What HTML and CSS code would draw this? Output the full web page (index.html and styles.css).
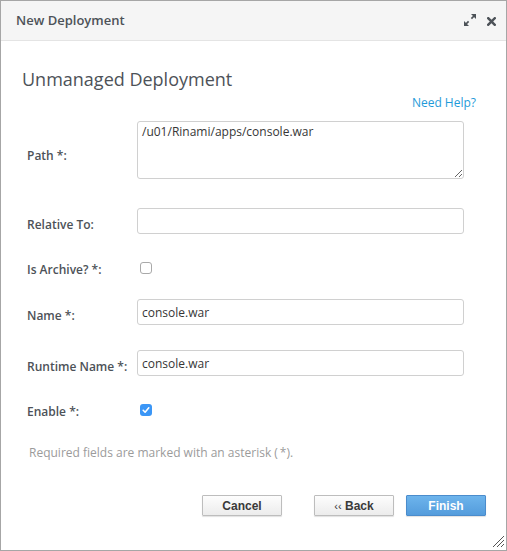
FILE: index.html
```html
<!DOCTYPE html>
<html>
<head>
<meta charset="utf-8">
<title>New Deployment</title>
<link rel="stylesheet" href="styles.css">
</head>
<body>
<div class="dialog">
  <div class="header">
    <span class="title">New Deployment</span>
    <span class="tools">
      <svg class="icon-expand" width="12" height="12" viewBox="0 0 12 12">
        <polygon points="0,12 0,7 5,12" fill="#4d5258"/>
        <line x1="1.5" y1="10.5" x2="4.6" y2="7.4" stroke="#4d5258" stroke-width="1.7"/>
        <polygon points="12,0 7,0 12,5" fill="#4d5258"/>
        <line x1="10.5" y1="1.5" x2="7.4" y2="4.6" stroke="#4d5258" stroke-width="1.7"/>
      </svg>
      <svg class="icon-close" width="9" height="9" viewBox="0 0 9 9">
        <path d="M1.2 1.2 L7.8 7.8 M7.8 1.2 L1.2 7.8" stroke="#4d5258" stroke-width="2.4" stroke-linecap="square"/>
      </svg>
    </span>
  </div>
  <div class="content">
    <h2 class="heading">Unmanaged Deployment</h2>
    <div class="help-line"><a class="help" href="#">Need Help?</a></div>
    <div class="form">
      <div class="row row-path">
        <label class="label">Path *:</label>
        <textarea class="field textarea">/u01/Rinami/apps/console.war</textarea>
      </div>
      <div class="row row-input row-relative">
        <label class="label">Relative To:</label>
        <input class="field input" type="text" value="">
      </div>
      <div class="row row-check">
        <label class="label">Is Archive? *:</label>
        <span class="check"></span>
      </div>
      <div class="row row-input">
        <label class="label">Name *:</label>
        <input class="field input" type="text" value="console.war">
      </div>
      <div class="row row-input">
        <label class="label">Runtime Name *:</label>
        <input class="field input" type="text" value="console.war">
      </div>
      <div class="row row-check">
        <label class="label">Enable *:</label>
        <span class="check checked">
          <svg width="12" height="12" viewBox="0 0 12 12"><path d="M3.2 6.3 L5.1 8.2 L8.8 3.8" fill="none" stroke="#fff" stroke-width="1.6" stroke-linecap="round" stroke-linejoin="round"/></svg>
        </span>
      </div>
    </div>
    <p class="note">Required fields are marked with an asterisk (&thinsp;*).</p>
    <div class="buttons">
      <button class="btn">Cancel</button>
      <button class="btn btn-back"><span class="chev">‹‹</span> Back</button>
      <button class="btn btn-primary">Finish</button>
    </div>
  </div>
  <svg class="grip" width="13" height="13" viewBox="0 0 13 13">
    <path d="M12 1 L1 12 M12 5 L5 12 M12 9 L9 12" stroke="#555" stroke-width="1"/>
  </svg>
</div>
</body>
</html>
```

FILE: styles.css
```css
html, body {
  margin: 0;
  padding: 0;
  background: #fff;
}
body {
  font-family: "Open Sans", "Liberation Sans", sans-serif;
  color: #4d5258;
}
.dialog {
  position: relative;
  width: 507px;
  height: 551px;
  box-sizing: border-box;
  border: 1px solid #a6a6a6;
  display: flex;
  flex-direction: column;
  overflow: hidden;
}
.header {
  height: 39px;
  background: #f5f5f5;
  border-bottom: 1px solid #e4e4e4;
  display: flex;
  align-items: center;
  justify-content: space-between;
  padding: 0 10px 0 15px;
}
.title {
  font-size: 13px;
  font-weight: 600;
  color: #4d5258;
  margin-top: -1px;
}
.tools {
  display: flex;
  align-items: center;
  gap: 11px;
}
.icon-expand { display: block; margin-top: -1px; }
.icon-close { display: block; margin-top: 1px; }
.content {
  flex: 1;
  display: flex;
  flex-direction: column;
}
.heading {
  margin: 26px 0 0 21px;
  font-size: 18px;
  line-height: 24px;
  font-weight: 400;
  color: #4d5258;
}
.help-line {
  margin: 4px 30px 0 0;
  text-align: right;
  font-size: 12px;
  line-height: 16px;
}
.help {
  color: #1f9bd9;
  text-decoration: none;
}
.form {
  margin: 10px 0 0 26px;
  display: flex;
  flex-direction: column;
}
.row {
  display: grid;
  grid-template-columns: 110px 327px;
  align-items: start;
}
.label {
  font-size: 12px;
  line-height: 16px;
  font-weight: 600;
  color: #4d5258;
}
.row-path .label { margin-top: 27px; }
.row-relative { margin-top: 29px; }
.row-input { height: 51px; }
.row-input .label { margin-top: 9px; }
.row-check { height: 40px; }
.row-check .label { margin-top: 3px; }
.field {
  box-sizing: border-box;
  width: 327px;
  margin: 0;
  border: 1px solid #d0d0d0;
  border-radius: 3px;
  font-family: "Open Sans", "Liberation Sans", sans-serif;
  font-size: 12px;
  color: #363636;
  background: #fff;
  outline: none;
}
.input {
  height: 26px;
  padding: 0 4px;
  line-height: 24px;
}
.textarea {
  height: 58px;
  padding: 2px 4px 0;
  line-height: 16px;
  resize: vertical;
  display: block;
}
.check {
  display: block;
  box-sizing: border-box;
  width: 12px;
  height: 12px;
  margin: 3px 0 0 3px;
  border: 1px solid #a9a9a9;
  border-radius: 3px;
  background: #fff;
}
.check.checked {
  border: none;
  background: #3b96f6;
}
.check svg { display: block; }
.note {
  margin: 4px 0 0 28px;
  font-size: 12px;
  line-height: 16px;
  color: #9b9b9b;
}
.buttons {
  margin: 34px 20px 0 0;
  display: flex;
  justify-content: flex-end;
}
.btn {
  box-sizing: border-box;
  width: 80px;
  height: 21px;
  margin: 0;
  padding: 0;
  border: 1px solid #bdbdbd;
  border-radius: 1px;
  background: linear-gradient(#fdfdfd, #ececec);
  box-shadow: 0 1px 1px rgba(0,0,0,0.12);
  font-family: "Liberation Sans", Arial, sans-serif;
  font-weight: 700;
  font-size: 12px;
  color: #3a3a3a;
  cursor: pointer;
}
.chev {
  font-weight: 400;
  font-size: 11px;
}
.btn-back { margin-left: 32px; }
.btn-primary {
  margin-left: 12px;
  border-color: #4b8ccc;
  background: linear-gradient(#6db4ec, #549cdc);
  color: #fff;
}
.grip {
  position: absolute;
  right: 1px;
  bottom: 2px;
}
```
